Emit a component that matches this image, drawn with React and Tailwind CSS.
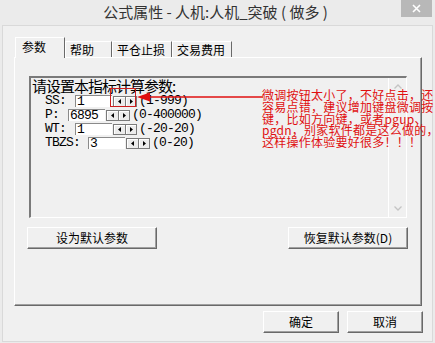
import React from 'react';

const cjk = "font-['Noto_Sans_CJK_SC','Liberation_Sans',sans-serif]";
const mono = "font-['Liberation_Mono','Noto_Sans_CJK_SC',monospace] text-[13px] tracking-[-0.8px]";

const rows = [
  { label: 'SS:', lw: 'w-[43px]', value: '1', range: '(1-999)' },
  { label: 'P:', lw: 'w-[36px]', value: '6895', range: '(0-400000)' },
  { label: 'WT:', lw: 'w-[43px]', value: '1', range: '(-20-20)' },
  { label: 'TBZS:', lw: 'w-[56px]', value: '3', range: '(0-20)' },
];

const tabs = [
  { name: '参数', w: 'w-[50px]', active: true },
  { name: '帮助', w: 'w-[47px]' },
  { name: '平仓止损', w: 'w-[60px]' },
  { name: '交易费用', w: 'w-[60px]' },
];

const note = [
  '微调按钮太小了，不好点击，还',
  '容易点错，建议增加键盘微调按',
  '键，比如方向键，或者pgup、',
  'pgdn，别家软件都是这么做的，',
  '这样操作体验要好很多！！！',
];

const SpinBtn = ({ dir }) => (
  <div className="flex flex-1 items-center justify-center border-l border-t border-white bg-[#ececec]">
    <svg width="3" height="5" viewBox="0 0 3 5">
      {dir === 'left'
        ? <polygon points="3,0 0,2.5 3,5" fill="#000" />
        : <polygon points="0,0 3,2.5 0,5" fill="#000" />}
    </svg>
  </div>
);

const Button = ({ children, className = '' }) => (
  <div
    className={`flex h-[22px] items-center justify-center border-l border-t border-r border-b border-l-white border-t-white border-r-[#696969] border-b-[#696969] bg-[#f0f0f0] text-[12px] text-black shadow-[inset_-1px_-1px_0_#a0a0a0] ${className}`}
  >
    {children}
  </div>
);

const App = () => {
  return (
    <div className={`relative h-[343px] w-[435px] overflow-hidden bg-[#ebebeb] ${cjk}`}>
      {/* title bar */}
      <div className="flex h-[25px]">
        <div className="w-[30px]" />
        <div className="flex flex-1 items-center justify-center pb-[1px] text-[15px] text-[#333]">
          公式属性 - 人机:人机_突破 ( 做多 )
        </div>
        <div className="mr-[3px] flex h-[17px] w-[31px] items-center justify-center bg-[#b8b8b8]">
          <svg width="9" height="9" viewBox="0 0 9 9">
            <path d="M1 1 L8 8 M8 1 L1 8" stroke="#fff" strokeWidth="1.6" />
          </svg>
        </div>
      </div>

      {/* client area */}
      <div className="ml-[2px] h-[317px] w-[431px] border border-[#d9d9d9] bg-[#f0f0f0]">
        {/* tabs */}
        <div className="ml-[12px] mt-[11px] flex items-end">
          {tabs.map(t => (
            <div
              key={t.name}
              className={`${t.w} flex items-center border-l border-t border-r border-l-white border-t-white border-r-[#696969] text-[12px] text-black ${
                t.active
                  ? 'relative z-10 -mb-px h-[21px] bg-[#f0f0f0] pl-[6px] pb-[2px]'
                  : 'h-[16px] pl-[4px]'
              }`}
            >
              {t.name}
            </div>
          ))}
        </div>

        {/* tab panel */}
        <div className="ml-[11px] h-[249px] w-[408px] border border-l-white border-t-white border-r-[#696969] border-b-[#696969] shadow-[inset_-1px_-1px_0_#a0a0a0]">
          {/* parameter box */}
          <div className="ml-[14px] mt-[18px] flex h-[142px] w-[378px] border-2 border-l-[#7a7a7a] border-t-[#7a7a7a] border-r-white border-b-white border-r-[1px] border-b-[1px]">
            <div className="flex-1 pl-[1px]">
              <div className="h-[16px] text-[15px] leading-[16px] tracking-[-1px] text-black">
                请设置本指标计算参数:
              </div>
              {rows.map(r => (
                <div key={r.label} className="flex h-[14px] items-center">
                  <span className={`${r.lw} pl-[13px] ${mono} text-black`}>{r.label}</span>
                  <div className={`h-[12px] w-[37px] border-l border-t border-[#8a8a8a] bg-white pl-[1px] ${mono} leading-[12px] text-black`}>
                    {r.value}
                  </div>
                  <div className="ml-[1px] flex h-[11px] w-[24px] gap-px bg-[#7a7a7a] p-px">
                    <SpinBtn dir="left" />
                    <SpinBtn dir="right" />
                  </div>
                  <span className={`ml-[2px] ${mono} text-black`}>{r.range}</span>
                </div>
              ))}
            </div>
            <div className="flex w-[18px] flex-col items-center justify-between border-l border-white py-[6px]">
              <svg width="8" height="5" viewBox="0 0 8 5">
                <path d="M0.5 4.5 L4 1 L7.5 4.5" fill="none" stroke="#c4c4c4" strokeWidth="1.3" />
              </svg>
              <svg width="8" height="5" viewBox="0 0 8 5">
                <path d="M0.5 0.5 L4 4 L7.5 0.5" fill="none" stroke="#c4c4c4" strokeWidth="1.3" />
              </svg>
            </div>
          </div>

          {/* default buttons */}
          <div className="mt-[9px] flex justify-between pl-[12px] pr-[13px]">
            <Button className="w-[130px]">设为默认参数</Button>
            <Button className="w-[120px]">恢复默认参数(D)</Button>
          </div>
        </div>

        {/* ok / cancel */}
        <div className="mr-[9px] mt-[5px] flex justify-end gap-[8px]">
          <Button className="w-[76px]">确定</Button>
          <Button className="w-[76px]">取消</Button>
        </div>
      </div>

      {/* red annotation drawn over the dialog */}
      <div className="absolute left-[110px] top-[88px] h-[19px] w-[26px] border border-[#cc1c1c]" />
      <svg className="absolute left-[136px] top-[90px]" width="128" height="14" viewBox="0 0 128 14">
        <polygon points="1,7 14,2.5 14,11.5" fill="#e01010" />
        <line x1="13" y1="7" x2="127" y2="7" stroke="#e01010" strokeWidth="1.5" />
      </svg>
      <div className="absolute left-[262px] top-[89px] whitespace-nowrap text-[12px] leading-[11.8px] tracking-[0.25px] text-[#e01010]">
        {note.map(l => (
          <div key={l}>{l}</div>
        ))}
      </div>
    </div>
  );
};

export default App;
